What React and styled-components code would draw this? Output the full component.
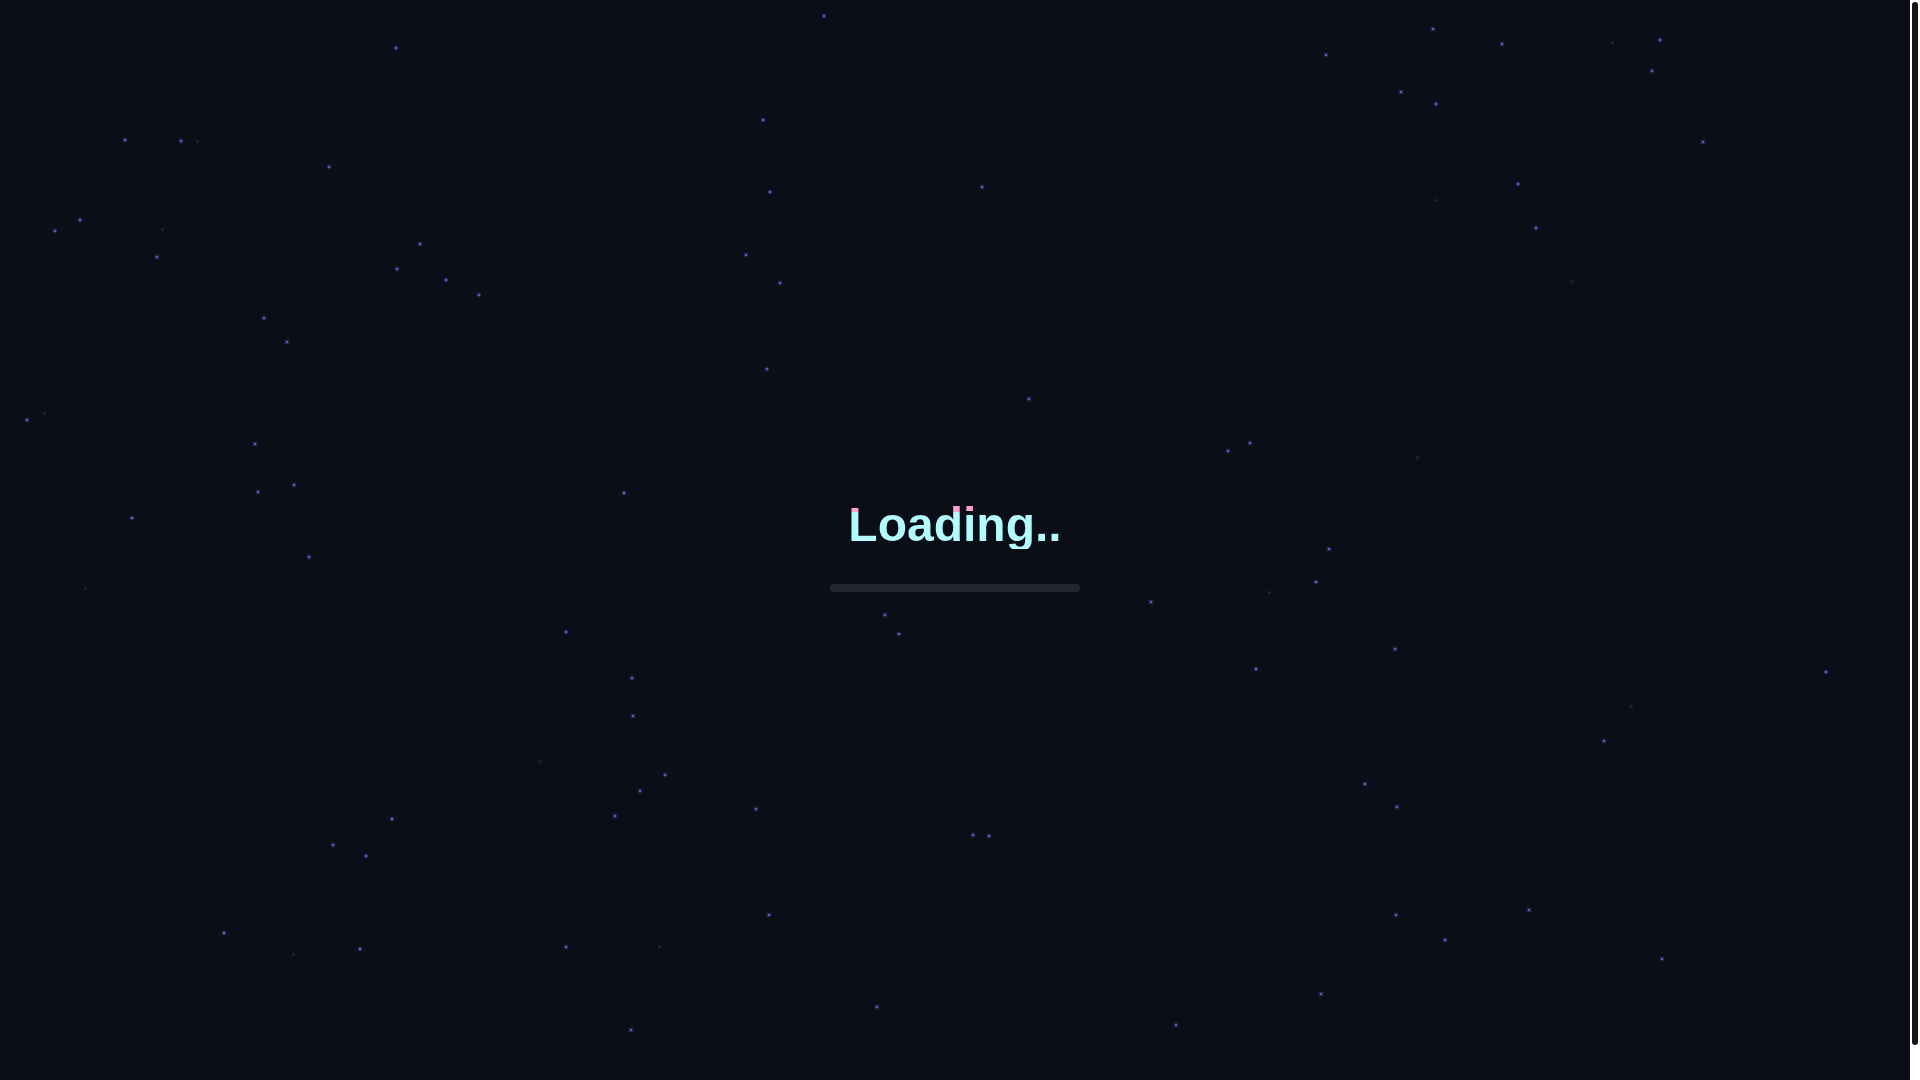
import React, { useState } from "react";
import styled, { createGlobalStyle } from "styled-components";

// star positions, measured on a 1568px wide copy of the screen
const SCALE = 1920 / 1568;
const stars = [
  [673, 13], [323, 39], [102, 114], [148, 115], [162, 116, 1], [269, 136],
  [623, 98], [629, 157], [802, 153], [45, 189], [65, 180], [133, 188, 1],
  [128, 210], [343, 199], [324, 220], [364, 229], [391, 241], [609, 208],
  [637, 231], [216, 260], [234, 279], [626, 301], [840, 326], [22, 343],
  [37, 338, 1], [208, 363], [240, 396], [211, 402], [108, 423], [510, 403],
  [252, 455], [70, 481, 1], [1003, 368], [1021, 362], [1158, 374, 1],
  [1085, 448], [1075, 475], [1037, 484, 1], [940, 492], [723, 502],
  [734, 518], [462, 516], [516, 554], [517, 585], [1139, 530], [1026, 546],
  [1491, 549], [1333, 577, 1], [1310, 605], [1115, 640], [1141, 659],
  [543, 633], [523, 646], [442, 622, 1], [502, 666], [617, 661], [320, 669],
  [272, 690], [299, 699], [795, 682], [808, 683], [628, 747], [183, 762],
  [240, 780, 1], [294, 775], [462, 773], [539, 773, 1], [1140, 747],
  [1180, 768], [1249, 743], [1357, 783], [1079, 812], [716, 822], [960, 837],
  [515, 841], [1083, 45], [1144, 75], [1173, 85], [1170, 24], [1227, 36],
  [1317, 35, 1], [1356, 33], [1349, 58], [1391, 116], [1240, 150],
  [1254, 186], [1173, 164, 1], [1285, 230, 1],
];

const GlobalStyle = createGlobalStyle`
  html, body {
    margin: 0;
    padding: 0;
    background: #0a0e17;
    font-family: "Liberation Sans", Arial, sans-serif;
  }
`;

const Page = styled.div`
  position: relative;
  width: calc(100% - 10px);
  min-height: 1114px;
  background: #0a0e17;
  overflow: hidden;
`;

const StarField = styled.div`
  position: absolute;
  inset: 0;
  pointer-events: none;
`;

const Star = styled.span`
  position: absolute;
  width: ${(p) => (p.$dim ? 1 : 2)}px;
  height: ${(p) => (p.$dim ? 1 : 2)}px;
  border-radius: 50%;
  background: #6f6de0;
  opacity: ${(p) => (p.$dim ? 0.5 : 1)};
  box-shadow: 0 0 2px 1px rgba(100, 98, 210, 0.55);
`;

const Screen = styled.main`
  position: relative;
  height: 100vh;
  box-sizing: border-box;
  padding-top: 13px;
  display: flex;
  flex-direction: column;
  align-items: center;
  justify-content: center;
`;

const Title = styled.h1`
  margin: 0 0 35px;
  font-size: 48px;
  line-height: 48px;
  font-weight: 700;
  color: transparent;
  background: linear-gradient(
    180deg,
    #ff9fd4 0,
    #ff9fd4 11.5px,
    #b4fbff 11.5px,
    #b4fbff 100%
  );
  -webkit-background-clip: text;
  background-clip: text;
`;

const Track = styled.div`
  width: 250px;
  height: 8px;
  border-radius: 4px;
  background: #22262e;
  overflow: hidden;
`;

const Fill = styled.div`
  height: 100%;
  background: #b4fbff;
`;

/* the window's scroll rail, as it shows in the screen */
const ScrollRail = styled.div`
  position: fixed;
  top: 0;
  right: 0;
  bottom: 0;
  width: 10px;
  background: #ffffff;
`;

const ScrollThumb = styled.div`
  margin: 2px 2px 0;
  height: 1043px;
  border-radius: 3px;
  background: #151515;
`;

export default function App() {
  const [progress] = useState(0);

  return (
    <>
      <GlobalStyle />
      <Page>
        <StarField>
          {stars.map(([x, y, dim], i) => (
            <Star
              key={i}
              $dim={dim}
              style={{ left: Math.round(x * SCALE) - 1, top: Math.round(y * SCALE) - 1 }}
            />
          ))}
        </StarField>
        <Screen>
          <Title>Loading..</Title>
          <Track>
            <Fill style={{ width: `${progress}%` }} />
          </Track>
        </Screen>
      </Page>
      <ScrollRail>
        <ScrollThumb />
      </ScrollRail>
    </>
  );
}
